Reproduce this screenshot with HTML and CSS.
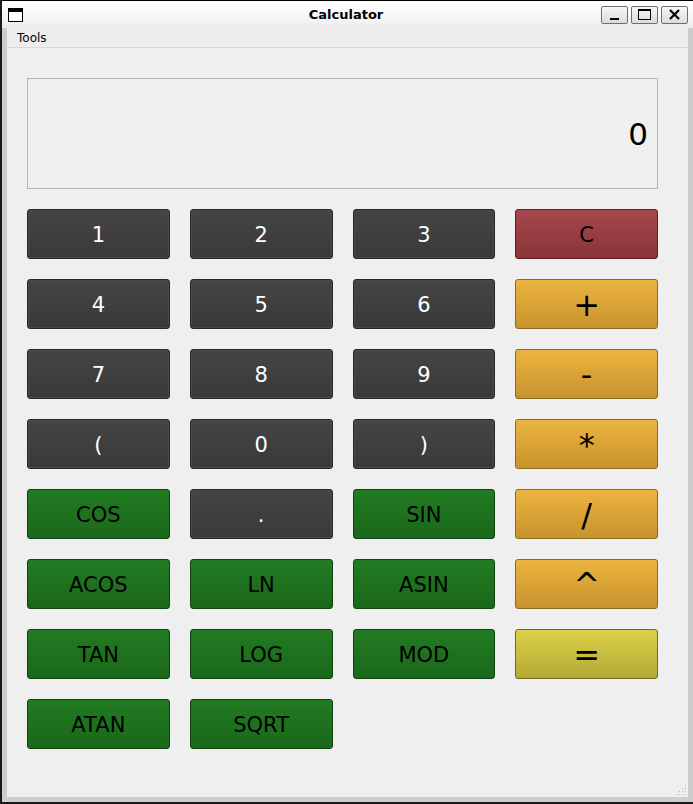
FILE: index.html
```html
<!DOCTYPE html>
<html>
<head>
<meta charset="utf-8">
<link rel="stylesheet" href="styles.css">
</head>
<body>
<div class="window">
  <div class="titlebar">
    <div class="tb-left">
      <svg class="app-icon" width="15" height="14" viewBox="0 0 15 14"><rect x="0.5" y="0.5" width="14" height="13" fill="#fff" stroke="#000"/><rect x="0" y="0" width="15" height="4" fill="#000"/></svg>
    </div>
    <div class="title">Calculator</div>
    <div class="tb-right">
      <div class="wbtn"><svg width="27" height="18" viewBox="0 0 27 18"><rect x="9" y="12" width="9" height="2" fill="#000"/></svg></div>
      <div class="wbtn"><svg width="27" height="18" viewBox="0 0 27 18"><rect x="7.5" y="3.5" width="12" height="10" fill="none" stroke="#000"/><rect x="7" y="3" width="13" height="2" fill="#000"/></svg></div>
      <div class="wbtn"><svg width="27" height="18" viewBox="0 0 27 18"><path d="M9 4 L18 13 M18 4 L9 13" stroke="#000" stroke-width="2.2"/></svg></div>
    </div>
  </div>
  <div class="frame">
    <div class="menubar"><span class="menu-item">Tools</span></div>
    <div class="content">
      <div class="display"><span class="value">0</span></div>
      <div class="keys">
        <button class="key dark">1</button>
        <button class="key dark">2</button>
        <button class="key dark">3</button>
        <button class="key red">C</button>
        <button class="key dark">4</button>
        <button class="key dark">5</button>
        <button class="key dark">6</button>
        <button class="key orange big">+</button>
        <button class="key dark">7</button>
        <button class="key dark">8</button>
        <button class="key dark">9</button>
        <button class="key orange big">-</button>
        <button class="key dark">(</button>
        <button class="key dark">0</button>
        <button class="key dark">)</button>
        <button class="key orange big">*</button>
        <button class="key green">COS</button>
        <button class="key dark">.</button>
        <button class="key green">SIN</button>
        <button class="key orange big">/</button>
        <button class="key green">ACOS</button>
        <button class="key green">LN</button>
        <button class="key green">ASIN</button>
        <button class="key orange big">^</button>
        <button class="key green">TAN</button>
        <button class="key green">LOG</button>
        <button class="key green">MOD</button>
        <button class="key yellow big">=</button>
        <button class="key green">ATAN</button>
        <button class="key green">SQRT</button>
      </div>
    </div>
    <svg class="grip" width="12" height="12" viewBox="0 0 12 12">
      <g fill="#b8b8b8">
        <rect x="10" y="1" width="1" height="1"/>
        <rect x="7" y="4" width="1" height="1"/><rect x="10" y="4" width="1" height="1"/>
        <rect x="4" y="7" width="1" height="1"/><rect x="7" y="7" width="1" height="1"/><rect x="10" y="7" width="1" height="1"/>
        <rect x="1" y="10" width="1" height="1"/><rect x="4" y="10" width="1" height="1"/><rect x="7" y="10" width="1" height="1"/><rect x="10" y="10" width="1" height="1"/>
      </g>
    </svg>
  </div>
</div>
</body>
</html>
```

FILE: styles.css
```css
html, body {
  margin: 0;
  padding: 0;
  background: #efefef;
}
.window {
  width: 693px;
  height: 804px;
  box-sizing: border-box;
  border-top: 1px solid #000;
  border-left: 2px solid #1a1a1a;
  border-bottom: 2px solid #1a1a1a;
  display: flex;
  flex-direction: column;
  font-family: "DejaVu Sans", sans-serif;
}
.titlebar {
  height: 27px;
  flex: none;
  display: grid;
  grid-template-columns: 1fr auto 1fr;
  align-items: center;
  background: linear-gradient(#ffffff, #f6f6f6 60%, #ececec);
}
.tb-left {
  display: flex;
  align-items: center;
  padding-left: 6px;
  padding-top: 1px;
}
.app-icon { display: block; }
.title {
  font-weight: bold;
  font-size: 13px;
  color: #000;
  padding-right: 3px;
}
.tb-right {
  display: flex;
  justify-content: flex-end;
  gap: 3px;
  padding-right: 5px;
  padding-top: 1px;
}
.wbtn {
  width: 25px;
  height: 16px;
  border: 1px solid #6e6e6e;
  border-radius: 2px;
  background: linear-gradient(#f6f6f6, #dcdcdc);
  display: flex;
  align-items: center;
  justify-content: center;
  overflow: hidden;
}
.wbtn svg { display: block; flex: none; }
.frame {
  flex: 1;
  position: relative;
  display: flex;
  flex-direction: column;
  border: 5px solid #cdcdcd;
  border-top: 0;
  background: #efefef;
}
.menubar {
  height: 19px;
  flex: none;
  border-bottom: 1px solid #d9d9d9;
  display: flex;
  align-items: center;
  background: #eeeeee;
}
.menu-item {
  font-size: 12px;
  padding-left: 10px;
  color: #000;
}
.content {
  padding: 30px 30px 0 20px;
}
.display {
  height: 111px;
  box-sizing: border-box;
  border: 1px solid #b4b4b4;
  display: flex;
  align-items: center;
  justify-content: flex-end;
  padding-right: 9px;
}
.value {
  font-size: 31px;
  color: #000;
}
.keys {
  margin-top: 20px;
  display: grid;
  grid-template-columns: repeat(4, 1fr);
  column-gap: 20px;
  row-gap: 20px;
}
.key {
  height: 50px;
  margin: 0;
  padding: 2px 0 0 0;
  border-radius: 3px;
  font-family: "DejaVu Sans", sans-serif;
  font-size: 21px;
  color: #000;
  box-sizing: border-box;
}
.key.dark {
  color: #fff;
  border: 1px solid #262626;
  background: linear-gradient(#454545, #393939);
  box-shadow: inset 0 0 0 1px #4a4a4a;
}
.key.red {
  border: 1px solid #5e1e22;
  background: linear-gradient(#a6474c, #8a3539);
}
.key.orange {
  border: 1px solid #8a6a1e;
  background: linear-gradient(#ecb43f, #c8932e);
}
.key.green {
  border: 1px solid #0f420f;
  background: linear-gradient(#227b22, #1a681a);
}
.key.yellow {
  border: 1px solid #716c1c;
  background: linear-gradient(#dad047, #b4aa37);
}
.key.big {
  font-size: 32px;
}
.grip {
  position: absolute;
  right: 1px;
  bottom: 1px;
}
```
